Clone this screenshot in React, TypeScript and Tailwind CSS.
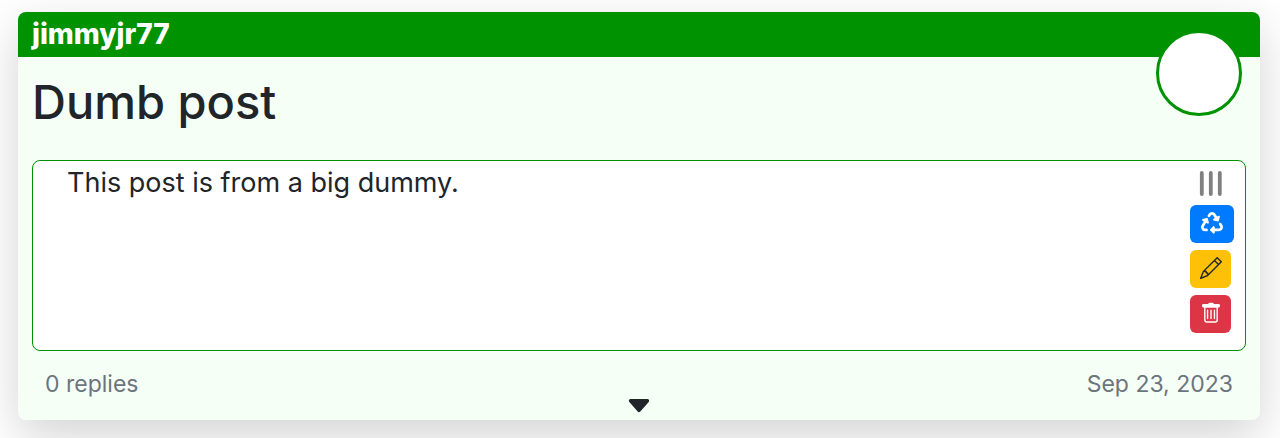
import React from "react";
import { BsCaretDownFill, BsPencil } from "react-icons/bs";
import { FaRecycle } from "react-icons/fa6";

function GripIcon() {
  return (
    <svg width="24" height="26" viewBox="0 0 24 26" fill="none" stroke="#808080" strokeWidth="3.8" strokeLinecap="round" aria-hidden="true">
      <path d="M2.8 2v21M11.8 2v21M20.8 2v21" />
    </svg>
  );
}

function TrashIcon() {
  return (
    <svg width="22" height="22" viewBox="0 0 16 16" fill="currentColor" aria-hidden="true">
      <path d="M5.5 5.5A.5.5 0 0 1 6 6v6a.5.5 0 0 1-1 0V6a.5.5 0 0 1 .5-.5m2.5 0a.5.5 0 0 1 .5.5v6a.5.5 0 0 1-1 0V6a.5.5 0 0 1 .5-.5m3 .5a.5.5 0 0 0-1 0v6a.5.5 0 0 0 1 0z" />
      <path d="M14.5 3a1 1 0 0 1-1 1H13v9a2 2 0 0 1-2 2H5a2 2 0 0 1-2-2V4h-.5a1 1 0 0 1-1-1V2.4a1 1 0 0 1 1-1H6a1 1 0 0 1 1-.9h2a1 1 0 0 1 1 .9h3.5a1 1 0 0 1 1 1zM4 4.1V13a1 1 0 0 0 1 1h6a1 1 0 0 0 1-1V4.1z" fillRule="evenodd" />
    </svg>
  );
}

export default function App() {
  return (
    <main className="overflow-hidden bg-white pt-3 pr-5 pb-[18px] pl-[18px] font-['Inter','Liberation_Sans',sans-serif] text-[#212529]">
      <article className="relative rounded-lg bg-[#f5fff5] shadow-[0_16px_48px_rgba(0,0,0,0.175)]">
        <header className="flex h-[45px] items-start rounded-t-lg bg-[#009200] px-[14px]">
          <a href="#profile" className="text-[28px] leading-[44px] font-extrabold text-white">jimmyjr77</a>
        </header>
        <div className="absolute top-[18px] right-[18px] size-[86px] rounded-full border-3 border-[#009200] bg-white" />
        <h1 className="px-[14px] pt-4 text-[47px] leading-[58px] font-medium">Dumb post</h1>
        <section className="mx-[14px] mt-[29px] flex min-h-[191px] justify-between rounded-lg border border-[#009200] bg-white pr-[11px] pl-[34px]">
          <p className="pt-px text-[27px] leading-[42px]">This post is from a big dummy.</p>
          <div className="flex flex-col items-start gap-[7px] pt-2">
            <button type="button" aria-label="Reorder" className="ml-[9px] h-[29px]"><GripIcon /></button>
            <button type="button" aria-label="Repost" className="flex h-[38px] w-11 items-center justify-center rounded-md bg-[#007bff] pb-0.5 text-white">
              <FaRecycle size={22} />
            </button>
            <button type="button" aria-label="Edit" className="flex h-[38px] w-[41px] items-center justify-center rounded-md bg-[#ffc107] pb-0.5">
              <BsPencil size={22} />
            </button>
            <button type="button" aria-label="Delete" className="flex h-[38px] w-[41px] items-center justify-center rounded-md bg-[#dc3545] pb-0.5 text-white">
              <TrashIcon />
            </button>
          </div>
        </section>
        <footer className="grid h-[69px] grid-cols-[1fr_auto_1fr] px-[27px] pt-[15px] text-[23px] leading-9 text-[#6c757d]">
          <a href="#replies">0 replies</a>
          <button type="button" aria-label="Show replies" className="flex h-[54px] items-end text-[#212529]">
            <BsCaretDownFill size={28} />
          </button>
          <time dateTime="2023-09-23" className="text-right">Sep 23, 2023</time>
        </footer>
      </article>
    </main>
  );
}
